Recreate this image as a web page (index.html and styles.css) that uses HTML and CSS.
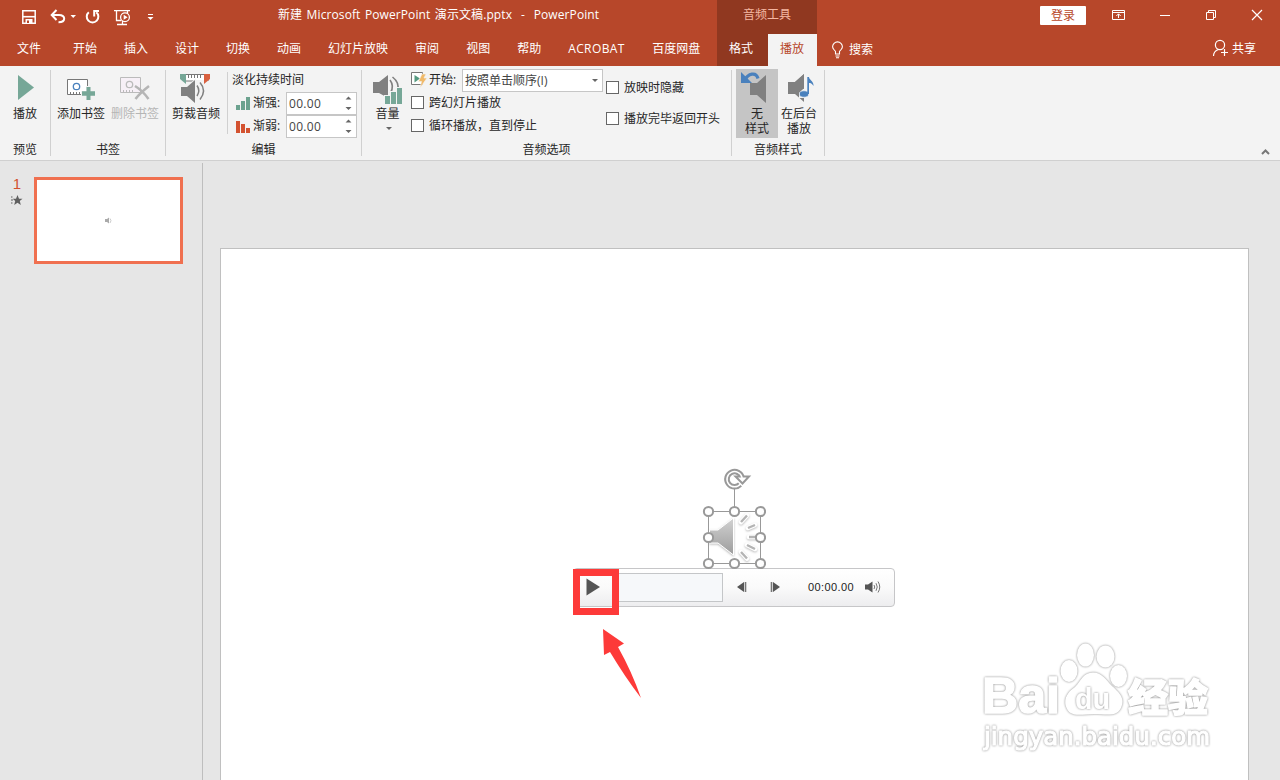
FILE: index.html
```html
<!DOCTYPE html>
<html lang="zh-CN">
  <head>
    <meta charset="UTF-8" />
    <meta name="viewport" content="width=device-width, initial-scale=1.0" />
    <title>新建 Microsoft PowerPoint 演示文稿.pptx - PowerPoint</title>
    <link rel="stylesheet" href="styles.css">
  </head>
  <body>
    <header class="header">
      <div class="title-bar">
        <div class="title-left">
          <svg class="quick-icons" viewBox="0 0 160 34" fill="none" stroke="#fff">
            <!-- save -->
            <path d="M22.8 10.8H35.2V23.2H22.8Z" stroke-width="1.5" />
            <path d="M23 16.7H35" stroke-width="1.6" />
            <path d="M25.5 19H32.5V24H25.5Z" fill="#fff" stroke="none" />
            <path d="M27 20.5H29V23H27Z" fill="#b7472a" stroke="none" />
            <!-- undo -->
            <path d="M52.5 15H59C66 15 66 22.2 58.5 22.2" stroke-width="2" />
            <path d="M56.5 10L51.7 15L56.5 20" stroke-width="2" />
            <path d="M70.5 15H76L73.2 18Z" fill="#fff" stroke="none" />
            <!-- redo -->
            <path d="M96.3 12.2A5.8 5.8 0 1 1 88.8 12.2" stroke-width="2" />
            <path d="M99 11H94.2V16.5" stroke-width="2" />
            <!-- slide show -->
            <path d="M114 10.7H130M116.5 11V20.5H121M127.5 11V13M122.5 21V24M117 24.5H127" stroke-width="1.3" />
            <circle cx="125" cy="17.3" r="4.4" stroke-width="1.3" />
            <path d="M123.7 14.8V19.8L127.6 17.3Z" fill="#fff" stroke="none" />
            <path d="M148 14.5H153" />
            <path d="M147.5 17H153.5L150.5 20Z" fill="#fff" stroke="none" />
          </svg>
          <span class="doc-title">新建 Microsoft PowerPoint 演示文稿.pptx &nbsp;-&nbsp; PowerPoint</span>
        </div>
        <div class="context-title">音频工具</div>
        <div class="title-right">
          <button class="login">登录</button>
          <svg class="window-icons" viewBox="1102 0 178 34" fill="none" stroke="#fff">
            <path d="M1112.5 10.5H1124.5V19.5H1112.5ZM1112.5 12.5H1124.5M1118.5 18V14M1116.3 16L1118.5 13.8L1120.7 16" />
            <path d="M1160 15.5H1170" />
            <path d="M1206.5 12.5H1213.5V19.5H1206.5ZM1208.5 12.5V10.5H1215.5V17.5H1213.5" />
            <path d="M1252 10L1262 20M1262 10L1252 20" stroke-width="1.2" />
          </svg>
        </div>
      </div>
      <nav class="tab-bar">
        <div class="tabs">
          <a class="tab file">文件</a>
          <a class="tab">开始</a>
          <a class="tab">插入</a>
          <a class="tab">设计</a>
          <a class="tab">切换</a>
          <a class="tab">动画</a>
          <a class="tab">幻灯片放映</a>
          <a class="tab">审阅</a>
          <a class="tab">视图</a>
          <a class="tab">帮助</a>
          <a class="tab acrobat">ACROBAT</a>
          <a class="tab">百度网盘</a>
        </div>
        <div class="context-tabs">
          <a class="context-tab">格式</a>
          <a class="context-tab active">播放</a>
        </div>
        <div class="tab-tools">
          <span class="search">
            <svg width="13" height="18" viewBox="831 41 13 18" fill="none" stroke="#fff" stroke-width="1.1">
              <path d="M835.5 54V51.5C834 49.5 832.6 48.8 832.6 46.8A4.9 4.9 0 0 1 842.4 46.8C842.4 48.8 841 49.5 839.5 51.5V54ZM835.5 56H839.5M836 57.8H839" />
            </svg>
            搜索
          </span>
          <span class="share">
            <svg width="17" height="18" viewBox="1212 40 17 18" fill="none" stroke="#fff" stroke-width="1.2">
              <circle cx="1220" cy="46" r="4.6" />
              <path d="M1213.5 57C1213.5 53 1216 51.3 1218.5 50.5M1221 53.5H1228M1224.5 50V57" />
            </svg>
            共享
          </span>
        </div>
      </nav>
    </header>

    <section class="ribbon">
      <div class="group preview">
        <div class="group-body">
          <button class="big-btn">
            <svg width="20" height="34" viewBox="15 70 20 34"><path d="M18 75L34 87.5L18 100Z" fill="#76a797" /></svg>
            <span>播放</span>
          </button>
        </div>
        <div class="group-label">预览</div>
      </div>

      <div class="group bookmarks">
        <div class="group-body">
          <button class="big-btn">
            <svg width="32" height="34" viewBox="65 70 32 34">
              <path d="M67.5 79.5H87.5V94.5H67.5Z" fill="#fff" stroke="#777" />
              <path d="M70.5 92V94M73.5 92V94M76.5 92V94M79.5 92V94" stroke="#777" />
              <circle cx="76.5" cy="86.5" r="3.2" fill="none" stroke="#4a81bd" stroke-width="1.3" />
              <path d="M86 86H91V91H96V96H91V101H86V96H81V91H86Z" fill="#f3f3f3" />
              <path d="M86.5 87H90.5V91.3H95V95.7H90.5V100H86.5V95.7H82V91.3H86.5Z" fill="#76a797" />
            </svg>
            <span>添加书签</span>
          </button>
          <button class="big-btn disabled">
            <svg width="32" height="34" viewBox="119 70 32 34">
              <path d="M120.5 77.5H140.5V92.5H120.5Z" fill="#f7f0f7" stroke="#bbb" />
              <path d="M123.5 90V92M126.5 90V92M129.5 90V92M132.5 90V92" stroke="#bbb" />
              <circle cx="129.5" cy="84.5" r="3.2" fill="none" stroke="#bbb" stroke-width="1.3" />
              <path d="M135 86C140 89 145 94 148.5 99M149 86C144 90 139 94 135.5 99" fill="none" stroke="#b5b5b5" stroke-width="2.5" />
            </svg>
            <span>删除书签</span>
          </button>
        </div>
        <div class="group-label">书签</div>
      </div>

      <div class="group editing">
        <div class="group-body">
          <button class="big-btn">
            <svg width="32" height="34" viewBox="180 70 32 34">
              <path d="M184 74.5H208V81H184Z" fill="#fff" stroke="#777" />
              <path d="M188.5 75V78M191.5 75V78M194.5 75V78M197.5 75V78M200.5 75V78" stroke="#777" />
              <path d="M180 74H186V84L180 79Z" fill="#76a797" />
              <path d="M180 86H187L196 78V104L187 96H180ZM196 80H208V100H196Z" fill="#f3f3f3" />
              <path d="M204 74H210V79L204 84Z" fill="#d9603f" />
              <path d="M181 87H187L195 80V103L187 96H181Z" fill="#808080" />
              <path d="M197 85.5Q200.5 90.5 197 96M200 82.5Q207 90.5 200 99.5" fill="none" stroke="#808080" stroke-width="1.5" />
            </svg>
            <span>剪裁音频</span>
          </button>
          <div class="fade">
            <div class="fade-title">淡化持续时间</div>
            <div class="fade-row">
              <svg width="14" height="13" viewBox="0 0 14 13"><path d="M0 8H4V13H0ZM5 4H9V13H5ZM10 0H14V13H10Z" fill="#6ca28f" /></svg>
              <span>渐强:</span>
              <div class="spinner">00.00
                <svg width="7" height="15" viewBox="0 0 7 15"><path d="M.5 3.5L3.5 .5L6.5 3.5ZM.5 11H6.5L3.5 14Z" fill="#666" /></svg>
              </div>
            </div>
            <div class="fade-row">
              <svg width="14" height="13" viewBox="0 0 14 13"><path d="M0 1H4V13H0ZM5 4H9V13H5ZM10 8H14V13H10Z" fill="#d35230" /></svg>
              <span>渐弱:</span>
              <div class="spinner">00.00
                <svg width="7" height="15" viewBox="0 0 7 15"><path d="M.5 3.5L3.5 .5L6.5 3.5ZM.5 11H6.5L3.5 14Z" fill="#666" /></svg>
              </div>
            </div>
          </div>
        </div>
        <div class="group-label">编辑</div>
      </div>

      <div class="group options">
        <div class="group-body">
          <button class="big-btn volume">
            <svg width="32" height="34" viewBox="372 70 32 34">
              <path d="M373 82H379L388 75V98L379 93H373Z" fill="#808080" />
              <path d="M390 80Q394.5 86 390.5 93M392.5 77Q400 83 397.5 90" fill="none" stroke="#808080" stroke-width="1.6" />
              <path d="M384 95H390V91H396V87H403V104H384Z" fill="#f3f3f3" />
              <path d="M385 96H390V104H385ZM391 92H396V104H391ZM397 88H402V104H397Z" fill="#76a797" />
            </svg>
            <span>音量</span>
            <svg class="drop" width="6" height="3" viewBox="0 0 6 3"><path d="M0 0H6L3 3Z" fill="#666" /></svg>
          </button>
          <div class="start-col">
            <div class="start-row">
              <svg width="18" height="19" viewBox="411 69 18 19">
                <path d="M411.5 72.5H422.5V84.5H411.5Z" fill="#fff" stroke="#777" />
                <path d="M414.5 75L420 78.5L414.5 82.5Z" fill="#559980" />
                <path d="M422 74H426L424 78H427L420 88L421.5 81.5H418.5Z" fill="#f0b969" stroke="#f3f3f3" stroke-width=".6" />
              </svg>
              <span>开始:</span>
              <div class="select">按照单击顺序(I)
                <svg width="6" height="3" viewBox="0 0 6 3"><path d="M0 0H6L3 3Z" fill="#666" /></svg>
              </div>
            </div>
            <label class="check"><i class="box"></i>跨幻灯片播放</label>
            <label class="check"><i class="box"></i>循环播放，直到停止</label>
          </div>
          <div class="hide-col">
            <label class="check"><i class="box"></i>放映时隐藏</label>
            <label class="check"><i class="box"></i>播放完毕返回开头</label>
          </div>
        </div>
        <div class="group-label">音频选项</div>
      </div>

      <div class="group styles">
        <div class="group-body">
          <button class="big-btn selected">
            <svg width="32" height="34" viewBox="741 70 32 34">
              <path d="M750 83H757L766 75V103L757 95H750Z" fill="#808080" />
              <path d="M745 80C748 73.5 756 71.5 758 78.5" fill="none" stroke="#4a81bd" stroke-width="3.2" />
              <path d="M741 72V83H752L748.5 79.5L744 75Z" fill="#4a81bd" />
            </svg>
            <span>无<br>样式</span>
          </button>
          <button class="big-btn">
            <svg width="32" height="34" viewBox="783 70 32 34">
              <path d="M788 82H795L804 74V102L795 94H788Z" fill="#808080" />
              <path d="M799 90L807 88V76H811L814 87L809 98H799Z" fill="#f3f3f3" />
              <path d="M788 82H795L804 74V88L798 94H788Z" fill="#808080" />
              <ellipse cx="804" cy="94" rx="4.6" ry="3.2" fill="#4a81bd" stroke="#f3f3f3" stroke-width=".6" />
              <path d="M807.3 94V77H809C809 80 814 81 813.5 86C812 83.5 810.5 83 809 83V94Z" fill="#4a81bd" />
            </svg>
            <span>在后台<br>播放</span>
          </button>
        </div>
        <div class="group-label">音频样式</div>
      </div>
      <svg class="collapse" width="9" height="6" viewBox="0 0 9 6"><path d="M1 5L4.5 1.5L8 5" fill="none" stroke="#777" stroke-width="2" /></svg>
    </section>

    <main class="workspace">
      <aside class="thumbs">
        <div class="thumb-info">
          <span class="thumb-number">1</span>
          <svg width="12" height="11" viewBox="0 0 12 11">
            <path d="M6.5 0L8 3.7H11.5L8.8 6L9.8 10L6.5 7.7L3.2 10L4.2 6L1.7 3.7H5Z" fill="#606060" />
            <path d="M0 2H1.5M0 5H2M0 8H1.5" stroke="#606060" />
          </svg>
        </div>
        <div class="thumb">
          <svg width="8" height="7" viewBox="0 0 8 7"><path d="M0 2H2L4 .5V6.5L2 5H0Z" fill="#aaa" /><path d="M5 1.5Q7 3.5 5 6" fill="none" stroke="#ccc" /></svg>
        </div>
      </aside>

      <div class="slide">
        <div class="player">
          <svg width="15" height="18" viewBox="0 0 15 18"><path d="M.5 .5L14 9L.5 17.5Z" fill="#555" /></svg>
          <div class="track"></div>
          <svg class="step-back" width="10" height="10" viewBox="0 0 10 10"><path d="M0 5L7 0V10Z" fill="#555" /><path d="M8.5 0V10" stroke="#777" stroke-width="1.6" /></svg>
          <svg class="step-next" width="10" height="10" viewBox="0 0 10 10"><path d="M10 5L3 0V10Z" fill="#555" /><path d="M1.5 0V10" stroke="#777" stroke-width="1.6" /></svg>
          <span class="time">00:00.00</span>
          <svg width="16" height="14" viewBox="0 0 16 14">
            <path d="M0 4.5H3L7.5 1.5V12.5L3 9.5H0Z" fill="#555" />
            <path d="M9 5Q10.5 7 9 9M11 3.2Q13.5 7 11 10.8M13 1.5Q16.5 7 13 12.5" fill="none" stroke="#666" stroke-width=".9" />
          </svg>
        </div>

        <svg class="audio-object" width="66" height="106" viewBox="700 464 66 106">
          <defs>
            <linearGradient id="cone" x1="0" y1="0" x2="0" y2="1">
              <stop offset="0" stop-color="#d2d2d2" />
              <stop offset="1" stop-color="#9c9c9c" />
            </linearGradient>
            <filter id="soft" x="-30%" y="-30%" width="160%" height="160%">
              <feDropShadow dx="0" dy="1" stdDeviation="1.2" flood-color="#888" flood-opacity=".6" />
            </filter>
          </defs>
          <g filter="url(#soft)">
            <path d="M709.5 530H718L733.5 518V555L718 543H709.5Z" fill="url(#cone)" stroke="#fff" />
            <path d="M741 522L747 515.5M748 528L755 525M749 537H757M747 545L755 549M741 552L747 558.5" stroke="#fff" stroke-width="4.5" stroke-linecap="round" />
          </g>
          <path d="M741 522L747 515.5M748 528L755 525M749 537H757M747 545L755 549M741 552L747 558.5" stroke="#b4b4b4" stroke-width="2.4" />
          <path d="M734.5 489V511M708.5 511.5H760.5V563.5H708.5Z" fill="none" stroke="#999" />
          <g fill="#fff" stroke="#999" stroke-width="2">
            <circle cx="708.5" cy="511.5" r="4.6" />
            <circle cx="734.5" cy="511.5" r="4.6" />
            <circle cx="760.5" cy="511.5" r="4.6" />
            <circle cx="708.5" cy="537.5" r="4.6" />
            <circle cx="760.5" cy="537.5" r="4.6" />
            <circle cx="708.5" cy="563.5" r="4.6" />
            <circle cx="734.5" cy="563.5" r="4.6" />
            <circle cx="760.5" cy="563.5" r="4.6" />
          </g>
          <!-- rotate handle -->
          <path d="M740 484.5A7.6 7.6 0 1 1 742 477.5" fill="none" stroke="#999" stroke-width="5.6" />
          <path d="M735.5 476.5H749L742.5 483.5Z" fill="#fff" stroke="#999" stroke-width="2" />
          <path d="M740.5 484A7.6 7.6 0 1 1 742 477.5V479" fill="none" stroke="#fff" stroke-width="1.5" />
        </svg>

        <div class="marker"></div>
        <svg class="arrow" width="40" height="72" viewBox="602 628 40 72"><path d="M603 629L624 643.5L618 647Q632 672 641 698Q625 677 610 652L604 655Z" fill="#fd3a39" /></svg>

        <svg class="watermark" width="240" height="125" viewBox="975 635 240 125">
          <g fill="#fff">
            <ellipse cx="1069" cy="671" rx="8.5" ry="11" />
            <ellipse cx="1085.5" cy="655" rx="8.5" ry="11.5" />
            <ellipse cx="1105.5" cy="656.5" rx="9" ry="11" />
            <ellipse cx="1118.5" cy="676" rx="8.5" ry="11" />
            <path d="M1093 672.5C1102 672.5 1106 680 1112 686C1120 693 1124 698 1122 705C1119 717 1109 714.5 1094 714C1079 714.5 1069 718 1065.5 705C1064 697 1069 691 1075 687C1081 681 1083 672.5 1093 672.5Z" />
          </g>
          <text class="wm-bai" x="982" y="713" textLength="78" lengthAdjust="spacingAndGlyphs">Bai</text>
          <text class="wm-du" x="1075" y="709" textLength="35" lengthAdjust="spacingAndGlyphs">du</text>
          <text class="wm-cn" x="1128" y="711" textLength="80" lengthAdjust="spacingAndGlyphs">经验</text>
          <text class="wm-url" x="984" y="745" textLength="226" lengthAdjust="spacingAndGlyphs">jingyan.baidu.com</text>
        </svg>
      </div>
    </main>
  </body>
</html>
```
FILE: styles.css
```css
* {
  box-sizing: border-box;
}

body {
  margin: 0;
  width: 1280px;
  height: 780px;
  overflow: hidden;
  display: flex;
  flex-direction: column;
  background: #e6e6e6;
  color: #262626;
  font-family: "Open Sans", "Noto Sans CJK SC", sans-serif;
  font-size: 12px;
}

svg {
  display: block;
  flex: none;
}

button {
  border: none;
  padding: 0;
  background: none;
  color: inherit;
  font: inherit;
}

.header {
  background: #b7472a;
  color: #fff;
}

.title-bar,
.tab-bar {
  display: grid;
  grid-template-columns: 717px 100px 1fr;
}

.title-bar {
  height: 34px;
  line-height: 30px;
}

.title-left {
  display: flex;
}

.quick-icons {
  width: 160px;
  height: 34px;
  margin-right: 118px;
}

.doc-title {
  white-space: nowrap;
  letter-spacing: 0.1px;
  word-spacing: 1.2px;
}

.context-title {
  background: #903820;
  color: #f5b7a2;
  text-align: center;
}

.title-right {
  display: flex;
  justify-content: flex-end;
}

.login {
  width: 46px;
  height: 19px;
  margin: 6px 16px 0 0;
  background: #fff;
  color: #b7472a;
  line-height: 19px;
  border-radius: 1px;
}

.window-icons {
  width: 178px;
  height: 34px;
}

.tab-bar {
  height: 32px;
  line-height: 29px;
}

.tabs {
  display: flex;
  gap: 27px;
  padding-left: 17px;
  white-space: nowrap;
}

.file {
  margin-right: 5px;
}

.acrobat {
  width: 57px;
  letter-spacing: 0.4px;
}

.context-tabs {
  display: flex;
  background: #903820;
}

.context-tab {
  width: 51px;
  padding-left: 12px;
}

.context-tab.active {
  width: 49px;
  background: #f3f3f3;
  color: #b7472a;
}

.tab-tools {
  display: flex;
  justify-content: space-between;
  padding: 0 24px 0 14px;
}

.search,
.share {
  display: flex;
  align-items: center;
  gap: 5px;
  height: 31px;
}

.share {
  gap: 3px;
  height: 28px;
}

.ribbon {
  height: 95px;
  display: flex;
  background: #f3f3f3;
  border-bottom: 1px solid #d0d0d0;
}

.group {
  height: 86px;
  margin-top: 4px;
  display: flex;
  flex-direction: column;
  border-right: 1px solid #d0d0d0;
}

.group-body {
  height: 73px;
  flex: none;
  display: flex;
}

.group-label {
  line-height: 14px;
  text-align: center;
}

.preview {
  width: 51px;
}

.bookmarks {
  width: 115px;
}

.editing {
  width: 196px;
}

.options {
  width: 370px;
}

.styles {
  width: 93px;
}

.big-btn {
  height: 69px;
  margin-top: -1px;
  padding-top: 1px;
  display: flex;
  flex-direction: column;
  align-items: center;
  justify-content: flex-start;
  gap: 2px;
  line-height: 15px;
  white-space: nowrap;
}

.preview .big-btn {
  width: 50px;
}

.bookmarks .big-btn {
  width: 54px;
}

.bookmarks .group-body {
  padding-left: 3px;
}

.disabled {
  color: #b5b5b5;
}

.editing .big-btn {
  width: 60px;
}

.styles .group-body {
  padding-left: 4px;
}

.styles .big-btn {
  width: 42px;
}

.styles .selected {
  background: #c5c5c5;
}

.fade {
  margin: 2px 0 0 1px;
  height: 62px;
  padding-left: 4px;
  border-left: 1px solid #d0d0d0;
}

.fade-title {
  height: 20px;
  line-height: 16px;
}

.fade-row {
  height: 23px;
  display: flex;
  align-items: center;
  padding-left: 4px;
}

.fade-row span {
  width: 33px;
  height: 18px;
  margin-left: 3px;
  line-height: 16px;
}

.spinner,
.select {
  height: 23px;
  display: flex;
  align-items: center;
  justify-content: space-between;
  border: 1px solid #c6c6c6;
  background: #fff;
  color: #444;
  white-space: nowrap;
}

.spinner {
  width: 71px;
  padding: 0 4px 0 2px;
  letter-spacing: 0.3px;
}

.select {
  width: 141px;
  padding: 0 4px 0 2px;
}

.options .big-btn {
  width: 51px;
}

.big-btn .drop {
  margin: 4px 0 0 2px;
}

.start-col {
  width: 195px;
  margin: -1px 0 0 -2px;
}

.start-row {
  display: flex;
  height: 23px;
  line-height: 21px;
}

.start-row span {
  width: 33px;
}

.check {
  display: flex;
  align-items: center;
  height: 23px;
  gap: 5px;
  line-height: 21px;
  padding-bottom: 1px;
  white-space: nowrap;
}

.start-col .check {
  padding-bottom: 2px;
}

.box {
  width: 13px;
  height: 13px;
  flex: none;
  border: 1px solid #666;
  background: #fff;
}

.hide-col {
  padding-top: 6px;
  display: flex;
  flex-direction: column;
  gap: 8px;
}

.collapse {
  margin: 83px 0 0 436px;
}

.workspace {
  flex: 1;
  display: flex;
  padding-top: 2px;
}

.thumbs {
  width: 203px;
  display: flex;
  align-items: flex-start;
  padding-top: 14px;
  border-right: 1px solid #bebebe;
}

.thumb-info {
  width: 34px;
  display: flex;
  flex-direction: column;
  align-items: center;
}

.thumb-number {
  height: 18px;
  color: #d35230;
  font-family: "Liberation Sans", sans-serif;
  font-size: 15px;
  line-height: 14px;
}

.thumb {
  width: 149px;
  height: 87px;
  display: flex;
  align-items: center;
  justify-content: center;
  border: 3px solid #f07050;
  background: #fff;
}

.slide {
  position: relative;
  width: 1029px;
  margin: 85px 0 0 17px;
  border: 1px solid #c0c0c0;
  border-bottom: none;
  background: #fff;
}

/* objects placed freely on the slide */
.player {
  position: absolute;
  left: 352px;
  top: 319px;
  width: 322px;
  height: 39px;
  display: flex;
  align-items: center;
  padding: 0 13px 1px 12px;
  border: 1px solid #c6c6c8;
  border-radius: 4px;
  background: linear-gradient(#fff, #fafafa 50%, #ededef);
}

.track {
  width: 108px;
  height: 29px;
  margin-left: 14px;
  border: 1px solid #c4c6c8;
  background: #f6f8fa;
}

.step-back {
  margin-left: 14px;
}

.step-next {
  margin-left: 23px;
}

.time {
  margin: 0 11px 0 28px;
  width: 46px;
  color: #222;
  font-family: "Liberation Sans", sans-serif;
  font-size: 11px;
  letter-spacing: 0.4px;
}

.audio-object {
  position: absolute;
  left: 479px;
  top: 215px;
}

.marker {
  position: absolute;
  left: 352px;
  top: 320px;
  width: 46px;
  height: 46px;
  border: 7px solid #fd3a39;
}

.arrow {
  position: absolute;
  left: 381px;
  top: 379px;
}

.watermark {
  position: absolute;
  left: 754px;
  top: 386px;
}

.watermark g > *,
.watermark text {
  filter: drop-shadow(0 0 0.8px #888);
}

.watermark text {
  fill: #fff;
  stroke: #fff;
  stroke-width: 1.5px;
  stroke-linejoin: round;
}

.wm-bai {
  font: bold 50px "Liberation Sans", sans-serif;
}

.watermark .wm-du {
  font: bold 30px "Liberation Sans", sans-serif;
  stroke-width: 0;
}

.wm-cn {
  font: 900 38px "Noto Sans CJK SC", sans-serif;
}

.watermark .wm-url {
  font: 24px "DejaVu Sans", sans-serif;
  stroke-width: 1.2px;
}
```
